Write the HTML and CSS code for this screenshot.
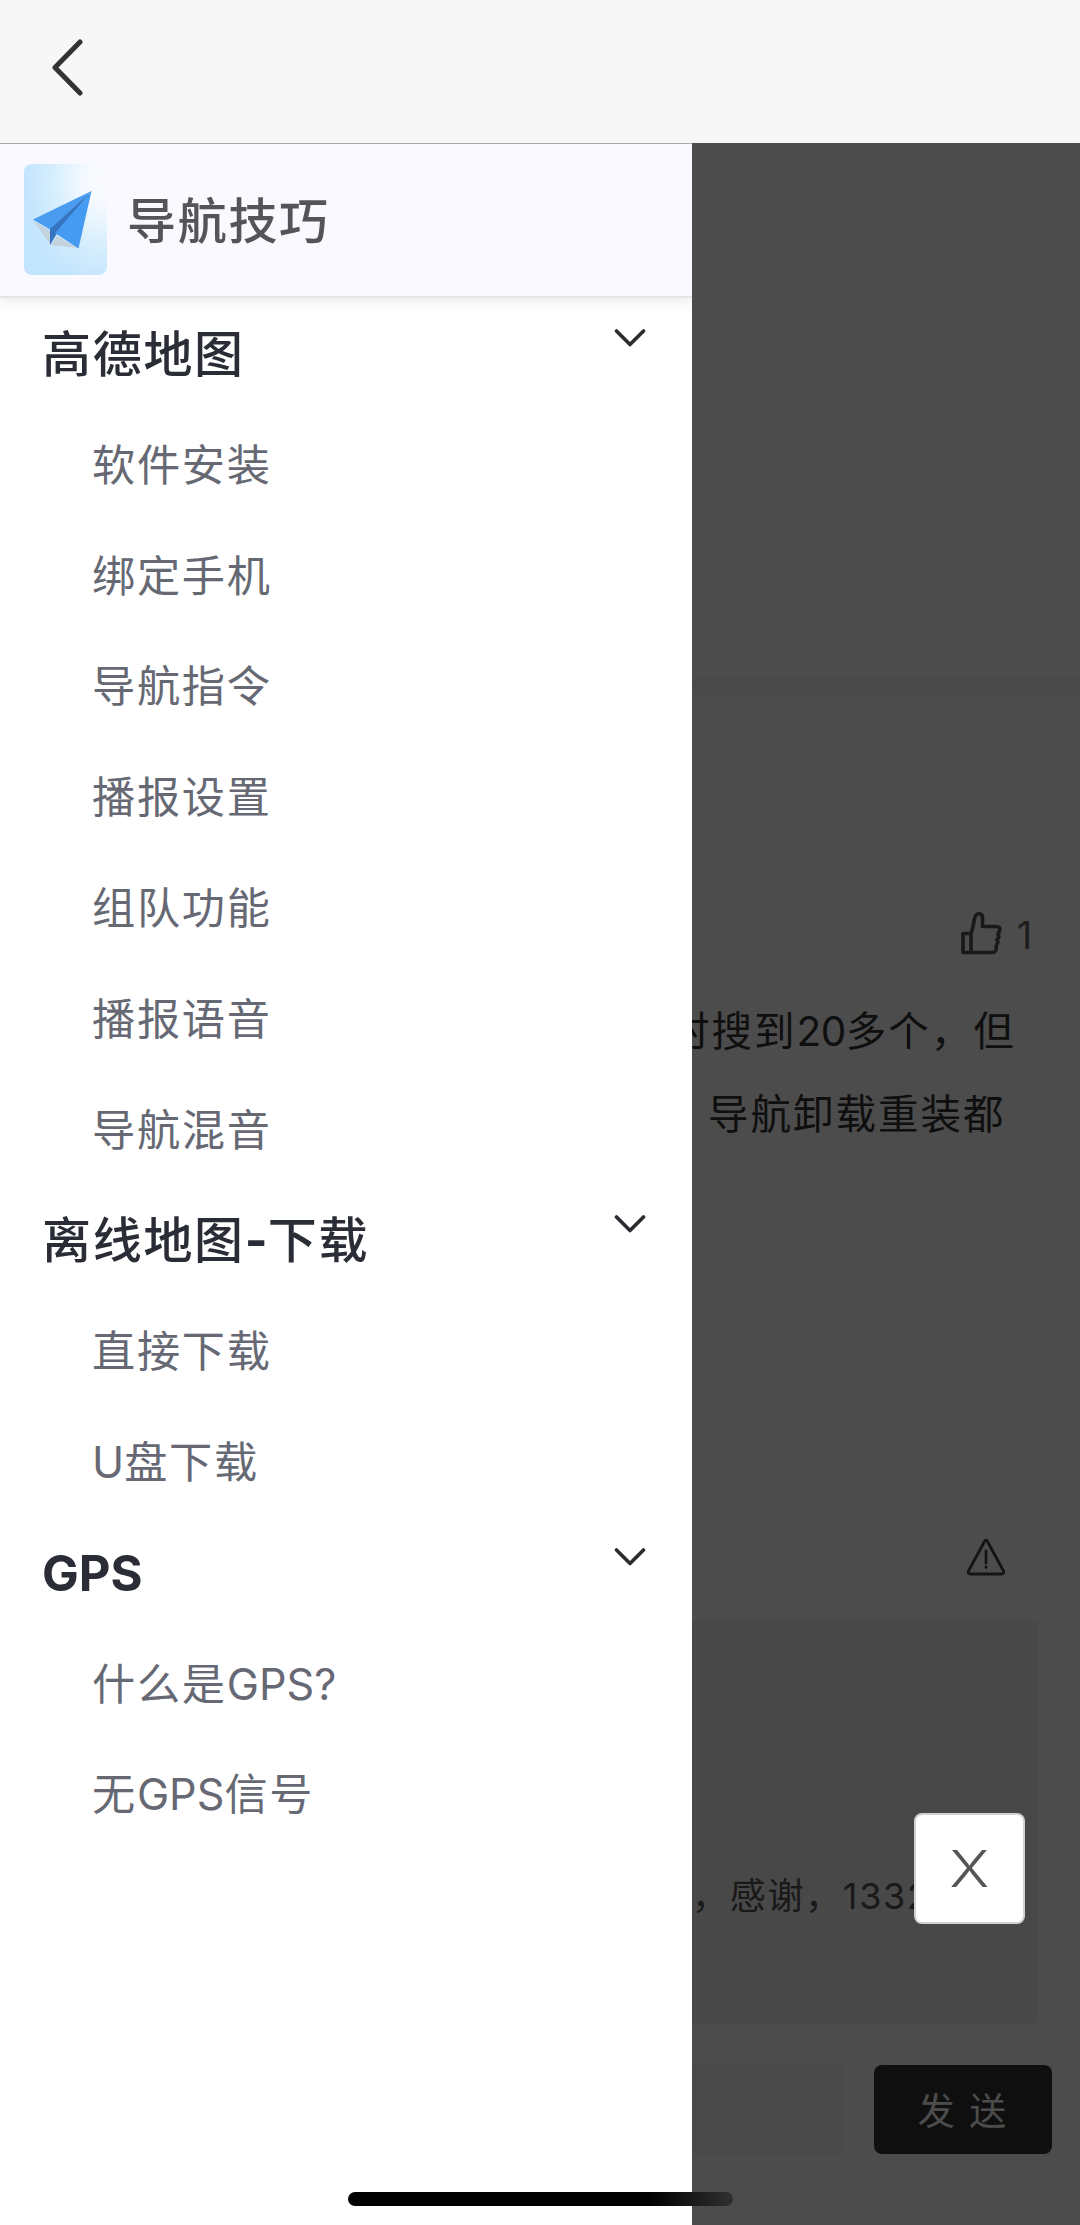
FILE: index.html
```html
<!DOCTYPE html>
<html lang="zh-CN">
<head>
    <meta charset="UTF-8">
    <meta name="viewport" content="width=device-width, initial-scale=1.0">
    <title>导航技巧</title>
    <link rel="stylesheet" href="styles.css">
</head>
<body>
    <header class="topbar">
        <svg class="back" viewBox="0 0 32 58"><path d="M28 4 L3 29.500 L28 55"/></svg>
    </header>

    <main class="main">
        <div class="page">
            <div class="divider"></div>
            <div class="likes">
                <svg class="thumb" viewBox="0 0 42 44">
                    <path d="M3 22.500H11V41.500H3ZM11 22.500C13 18 13.500 11 15 6C16.500 1.500 22.500 1.500 22.500 6.500V15.500H36C39 15.500 40.500 17 39.500 19.500L38 23.500L39 25.500L37 29L38 31L36 35L36.500 37C36 40.500 35 41.500 32 41.500H11"/>
                </svg>
                <span>1</span>
            </div>
            <p class="comment">时搜到<span class="en">20</span>多个，但</p>
            <p class="comment second">导航卸载重装都</p>
            <div class="report">
                <svg class="warn" viewBox="0 0 40 38">
                    <path d="M18.500 3.500Q20 1 21.500 3.500L37.500 33Q38.500 36 35.500 36H4.500Q1.500 36 2.500 33Z"/>
                    <path d="M20 13V25M20 29V29.500"/>
                </svg>
            </div>
            <div class="reply">，感谢，1332</div>
            <div class="send-bar">
                <div class="input"></div>
                <button class="send">发 送</button>
            </div>
        </div>

        <div class="mask"></div>

        <nav class="drawer">
            <div class="drawer-header">
                <svg class="logo" viewBox="0 0 83 111">
                    <defs>
                        <radialGradient id="sky" cx="0.950" cy="0.150" r="0.950">
                            <stop offset="0" stop-color="#fbfbff"/>
                            <stop offset="0.250" stop-color="#f4f9fe"/>
                            <stop offset="0.600" stop-color="#d8effd"/>
                            <stop offset="1" stop-color="#c2e4fd"/>
                        </radialGradient>
                    </defs>
                    <rect width="83" height="111" rx="8" fill="url(#sky)"/>
                    <path d="M9 56L26 67V80ZM27 81L33 72L54 84Z" fill="#c3d2dd"/>
                    <path d="M67.500 27L9 55.500L26 65.500Z" fill="#4a9cf0"/>
                    <path d="M67.500 27L26 65V81L32 71Z" fill="#3474c0"/>
                    <path d="M67.500 27L31 69L54.500 84.500Z" fill="#459af2"/>
                </svg>
                <span class="drawer-title">导航技巧</span>
            </div>

            <div class="menu">
                <div class="group"><span>高德地图</span><svg class="arrow" viewBox="0 0 32 20"><path d="M2.500 3L16 16.500L29.500 3"/></svg></div>
                <div class="item">软件安装</div>
                <div class="item">绑定手机</div>
                <div class="item">导航指令</div>
                <div class="item">播报设置</div>
                <div class="item">组队功能</div>
                <div class="item">播报语音</div>
                <div class="item">导航混音</div>
                <div class="group"><span>离线地图<span class="en">-</span>下载</span><svg class="arrow" viewBox="0 0 32 20"><path d="M2.500 3L16 16.500L29.500 3"/></svg></div>
                <div class="item">直接下载</div>
                <div class="item"><span class="en">U</span>盘下载</div>
                <div class="group"><span class="en">GPS</span><svg class="arrow" viewBox="0 0 32 20"><path d="M2.500 3L16 16.500L29.500 3"/></svg></div>
                <div class="item">什么是<span class="en">GPS?</span></div>
                <div class="item">无<span class="en">GPS</span>信号</div>
            </div>
        </nav>

        <button class="close"><span>X</span></button>
        <div class="home-indicator"></div>
    </main>
</body>
</html>
```

FILE: styles.css
```css
* {
    box-sizing: border-box;
}
body {
    margin: 0;
    height: 2225px;
    display: flex;
    flex-direction: column;
    overflow: hidden;
    font-family: Inter, "Noto Sans CJK SC", sans-serif;
    letter-spacing: 1.7px;
    background-color: #fff;
}
svg {
    display: block;
    fill: none;
    stroke-linecap: round;
    stroke-linejoin: round;
}
button {
    font-family: inherit;
    padding: 0;
}
.en {
    letter-spacing: 0;
}
.topbar {
    height: 143px;
    padding: 38px 0 0 52px;
    background-color: #f7f7f7;
}
.back {
    width: 32px;
    height: 58px;
    stroke: #333;
    stroke-width: 5;
}
.main {
    position: relative;
    flex: 1;
}

/* page behind the drawer */
.page {
    height: 100%;
    display: flex;
    flex-direction: column;
    color: #333;
}
.divider {
    height: 20px;
    margin-top: 532px;
    background-color: #f7f7f7;
}
.likes {
    display: flex;
    justify-content: flex-end;
    align-items: center;
    gap: 15px;
    height: 60px;
    margin-top: 208px;
    padding-right: 46px;
    font-size: 38px;
    color: #666;
}
.likes span {
    padding-top: 3px;
}
.thumb {
    width: 42px;
    height: 44px;
    stroke: #555;
    stroke-width: 3.6;
}
.comment {
    margin: 0;
    padding-left: 669px;
    font-size: 40.5px;
    line-height: 83px;
    letter-spacing: 2px;
    white-space: nowrap;
}
.comment .en {
    letter-spacing: -0.5px;
}
.likes + .comment {
    margin-top: 27px;
}
.comment.second {
    padding-left: 708px;
}
.report {
    display: flex;
    justify-content: flex-end;
    margin-top: 382px;
    padding-right: 74px;
}
.warn {
    width: 40px;
    height: 38px;
    stroke: #444;
    stroke-width: 2.8;
}
.reply {
    height: 403px;
    margin: 45px 42px 0 0;
    padding: 248px 0 0 692px;
    font-size: 36px;
    line-height: 54px;
    white-space: nowrap;
    overflow: hidden;
    color: #555;
    background-color: #f1f1f1;
    border-radius: 6px;
}
.send-bar {
    display: flex;
    align-items: center;
    gap: 31px;
    margin-top: 38px;
    padding-right: 28px;
}
.input {
    flex: 1;
    height: 95px;
    background-color: #f7f7f7;
    border-radius: 6px;
}
.send {
    width: 178px;
    height: 89px;
    padding-bottom: 2px;
    border: none;
    border-radius: 8px;
    background-color: #333;
    color: #fff;
    font-size: 37px;
    letter-spacing: 2px;
}
.mask {
    position: absolute;
    inset: 0;
    background-color: rgba(0, 0, 0, 0.7);
}

/* drawer */
.drawer {
    position: absolute;
    top: 0;
    left: 0;
    bottom: 0;
    width: 692px;
    overflow: hidden;
    background-color: #fff;
    border-top: 1px solid #aaa;
}
.drawer-header {
    display: flex;
    align-items: center;
    gap: 20px;
    height: 154px;
    padding: 0 0 2px 24px;
    background-color: #f9f9ff;
    border-bottom: 2px solid #e4e4ea;
    box-shadow: 0 2px 14px rgba(0, 0, 0, 0.1);
}
.logo {
    width: 83px;
    height: 111px;
}
.drawer-title {
    padding-bottom: 4px;
    font-size: 49px;
    font-weight: 500;
    color: #555459;
}
.menu {
    padding-top: 1px;
}
.group,
.item {
    height: 110.8px;
    line-height: 111.5px;
}
.group {
    display: flex;
    justify-content: space-between;
    padding: 0 46px 0 42px;
    font-size: 49px;
    font-weight: 500;
    color: #2b2d36;
}
.group .en {
    font-weight: 700;
}
.arrow {
    width: 32px;
    height: 20px;
    margin-top: 29px;
    stroke: #2b2b30;
    stroke-width: 3.6;
}
.item {
    padding-left: 92px;
    font-size: 43.2px;
    color: #666973;
}

.close {
    position: absolute;
    top: 1670px;
    left: 914px;
    width: 111px;
    height: 111px;
    border: 2px solid #d2d2d2;
    border-radius: 8px;
    background-color: #fff;
    color: #555;
    font-size: 51px;
    font-weight: 300;
    letter-spacing: 0;
}
.close span {
    display: block;
    transform: scaleX(1.18);
}
.home-indicator {
    position: absolute;
    top: 2049px;
    left: 348px;
    width: 385px;
    height: 14px;
    border-radius: 7px;
    background: linear-gradient(to right, #000 78%, #303030);
}
```
